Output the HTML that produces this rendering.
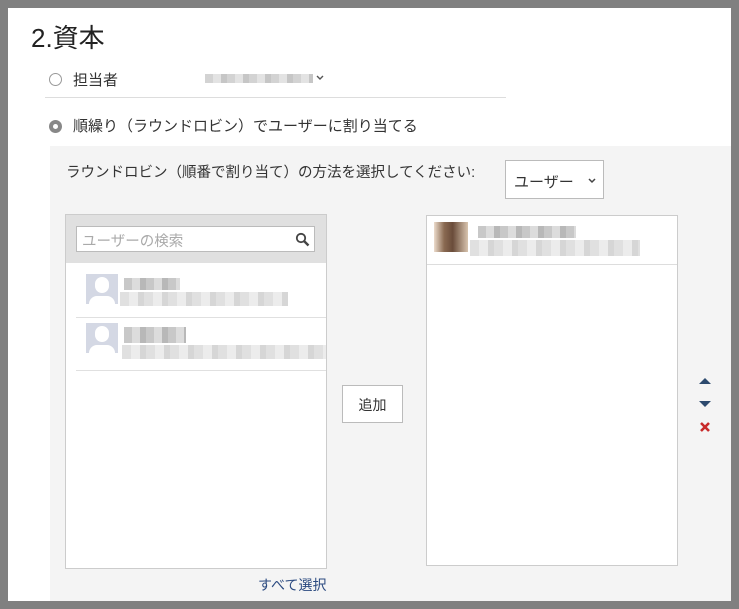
<!DOCTYPE html>
<html><head><meta charset="utf-8"><style>
*{box-sizing:border-box;margin:0;padding:0}
body{width:739px;height:609px;background:#808080;position:relative;overflow:hidden;font-family:"Liberation Sans","Noto Sans CJK JP",sans-serif;color:#333}
.a{position:absolute}
.main{left:8px;top:8px;width:723px;height:593px;background:#fff}
.blur{background:repeating-linear-gradient(90deg,#c8c8c8 0 8px,#dcdcdc 8px 16px,#b8b8b8 16px 22px)}
.blur2{background:repeating-linear-gradient(90deg,#e0e0e0 0 9px,#ececec 9px 18px,#d6d6d6 18px 24px)}
.radio{width:13px;height:13px;border:1px solid #999;border-radius:50%;background:#fff}
</style></head><body>
<div class="a main"></div>
<div class="a" style="left:31px;top:18px;font-size:26px;color:#222">2.資本</div>
<div class="a radio" style="left:49px;top:73px"></div>
<div class="a" style="left:73px;top:69px;font-size:15px">担当者</div>
<div class="a blur" style="left:205px;top:74px;width:108px;height:9px;opacity:.8"></div>
<svg class="a" style="left:316px;top:75px" width="8" height="6" viewBox="0 0 8 6"><path d="M1 1l3 3 3-3" fill="none" stroke="#555" stroke-width="1.4"/></svg>
<div class="a" style="left:45px;top:97px;width:461px;height:1px;background:#ddd"></div>
<div class="a radio" style="left:49px;top:120px;background:#888;border-color:#888"><div style="width:5px;height:5px;background:#fff;border-radius:50%;margin:3px"></div></div>
<div class="a" style="left:73px;top:115px;font-size:15px">順繰り（ラウンドロビン）でユーザーに割り当てる</div>
<div class="a" style="left:50px;top:146px;width:681px;height:455px;background:#f4f4f4"></div>
<div class="a" style="left:66px;top:161px;font-size:14.5px">ラウンドロビン（順番で割り当て）の方法を選択してください:</div>
<div class="a" style="left:505px;top:160px;width:99px;height:39px;border:1px solid #bbb;background:#fff;font-size:15px;padding:10px 0 0 8px">ユーザー<svg style="position:absolute;left:82px;top:17px" width="8" height="6" viewBox="0 0 8 6"><path d="M1 1l3 3 3-3" fill="none" stroke="#444" stroke-width="1.5"/></svg></div>
<div class="a" style="left:65px;top:214px;width:262px;height:355px;border:1px solid #ccc;background:#fff"></div>
<div class="a" style="left:66px;top:215px;width:260px;height:48px;background:#e0e0e0"></div>
<div class="a" style="left:76px;top:226px;width:239px;height:26px;border:1px solid #bbb;background:#fff;font-size:14.5px;color:#aaa;padding:3px 0 0 5px">ユーザーの検索
<svg style="position:absolute;right:4px;top:5px" width="15" height="15" viewBox="0 0 15 15"><circle cx="6" cy="6" r="4.2" fill="none" stroke="#444" stroke-width="1.8"/><path d="M9 9l4.5 4.5" stroke="#444" stroke-width="2.4"/></svg></div>
<div class="a" style="left:86px;top:274px;width:32px;height:30px;background:#d4d8e4"><div style="width:14px;height:16px;background:#fff;border-radius:7px;margin:3px auto 0"></div><div style="width:26px;height:8px;background:#fff;border-radius:8px 8px 0 0;margin:3px auto 0"></div></div>
<div class="a blur" style="left:124px;top:278px;width:56px;height:12px"></div>
<div class="a blur2" style="left:120px;top:292px;width:168px;height:14px"></div>
<div class="a" style="left:76px;top:317px;width:250px;height:1px;background:#e0e0e0"></div>
<div class="a" style="left:86px;top:323px;width:32px;height:30px;background:#d4d8e4"><div style="width:14px;height:16px;background:#fff;border-radius:7px;margin:3px auto 0"></div><div style="width:26px;height:8px;background:#fff;border-radius:8px 8px 0 0;margin:3px auto 0"></div></div>
<div class="a blur" style="left:124px;top:327px;width:62px;height:16px"></div>
<div class="a blur2" style="left:122px;top:345px;width:204px;height:14px"></div>
<div class="a" style="left:76px;top:370px;width:250px;height:1px;background:#e0e0e0"></div>
<div class="a" style="left:342px;top:385px;width:61px;height:38px;border:1px solid #bbb;background:#fff;font-size:14px;text-align:center;padding-top:9px">追加</div>
<div class="a" style="left:426px;top:215px;width:252px;height:351px;border:1px solid #ccc;background:#fff"></div>
<div class="a" style="left:427px;top:264px;width:250px;height:1px;background:#ddd"></div>
<div class="a" style="left:434px;top:222px;width:34px;height:30px;background:linear-gradient(90deg,#ecdccc,#8a6a52 30%,#6a4c3a 55%,#d8c4ae)"></div>
<div class="a blur" style="left:478px;top:226px;width:98px;height:12px"></div>
<div class="a blur2" style="left:470px;top:240px;width:170px;height:16px"></div>
<svg class="a" style="left:698px;top:375px" width="14" height="60" viewBox="0 0 14 60"><path d="M1 9L7 3L13 9Z" fill="#2d4a6e"/><path d="M1 26L13 26L7 32Z" fill="#2d4a6e"/><path d="M3 48l8 8M11 48l-8 8" stroke="#c82a2a" stroke-width="2.6"/></svg>
<div class="a" style="left:258px;top:575px;font-size:14px;color:#2b4a80">すべて選択</div>
</body></html>
